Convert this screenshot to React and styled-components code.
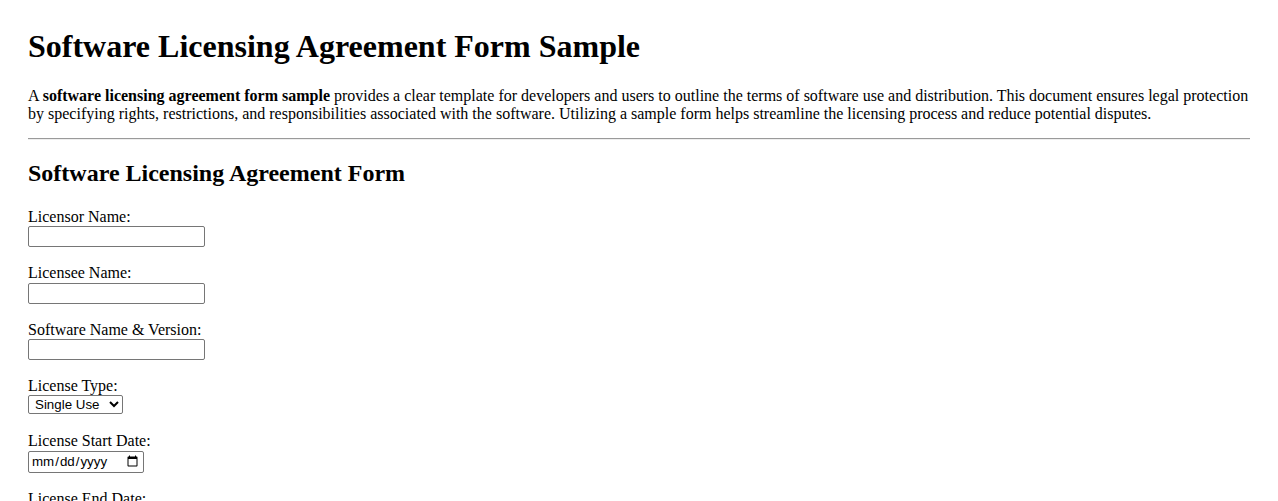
import React from 'react';
import styled, { createGlobalStyle } from 'styled-components';

const GlobalStyle = createGlobalStyle`
  html, body {
    margin: 0;
    padding: 0;
    background: #fff;
  }
  body {
    font-family: "Liberation Serif", "Times New Roman", serif;
    font-size: 16px;
    color: #000;
  }
`;

const Page = styled.div`
  padding: 28px 28px 40px;
`;

const Title = styled.h1`
  font-size: 32px;
  font-weight: bold;
  margin: 0 0 22px;
`;

const Intro = styled.p`
  margin: 0 0 14px;
  line-height: 18.4px;
`;

const Rule = styled.hr`
  margin: 0;
  border: none;
  border-top: 1px solid #9a9a9a;
  border-bottom: 1px solid #eeeeee;
`;

const FormTitle = styled.h2`
  font-size: 24px;
  font-weight: bold;
  margin: 19.92px 0 21px;
`;

const Form = styled.form`
  display: flex;
  flex-direction: column;
  align-items: flex-start;
  gap: 17px;
`;

const Field = styled.div`
  display: flex;
  flex-direction: column;
  align-items: flex-start;
`;

const Label = styled.label`
  display: block;
  line-height: 18.4px;
`;

const controlBase = `
  box-sizing: border-box;
  font-family: "Liberation Sans", Arial, sans-serif;
  font-size: 13.33px;
  color: #000;
  background: #fff;
  border: 1px solid #767676;
  border-radius: 2px;
  margin: 0;
`;

const TextInput = styled.input`
  ${controlBase}
  width: 177px;
  height: 21px;
  padding: 1px 2px;
`;

const Select = styled.select`
  ${controlBase}
  width: 95px;
  height: 19px;
  padding: 0 0 0 2px;
  margin-bottom: 1px;
`;

const DateInput = styled.input`
  ${controlBase}
  width: 116px;
  height: 22px;
  padding: 1px 2px;
`;

const fields = [
  { id: 'licensor', label: 'Licensor Name:' },
  { id: 'licensee', label: 'Licensee Name:' },
  { id: 'software', label: 'Software Name & Version:' },
];

export default function App() {
  return (
    <>
      <GlobalStyle />
      <Page>
        <Title>Software Licensing Agreement Form Sample</Title>
        <Intro>
          A <strong>software licensing agreement form sample</strong> provides a clear template for
          developers and users to outline the terms of software use and distribution. This document
          ensures legal protection by specifying rights, restrictions, and responsibilities associated
          with the software. Utilizing a sample form helps streamline the licensing process and reduce
          potential disputes.
        </Intro>
        <Rule />
        <FormTitle>Software Licensing Agreement Form</FormTitle>
        <Form onSubmit={e => e.preventDefault()}>
          {fields.map(f => (
            <Field key={f.id}>
              <Label htmlFor={f.id}>{f.label}</Label>
              <TextInput id={f.id} type="text" />
            </Field>
          ))}
          <Field>
            <Label htmlFor="licenseType">License Type:</Label>
            <Select id="licenseType" defaultValue="single">
              <option value="single">Single Use</option>
              <option value="multi">Multi-User</option>
              <option value="site">Site License</option>
              <option value="enterprise">Enterprise</option>
            </Select>
          </Field>
          <Field>
            <Label htmlFor="startDate">License Start Date:</Label>
            <DateInput id="startDate" type="date" />
          </Field>
          <Field>
            <Label htmlFor="endDate">License End Date:</Label>
            <DateInput id="endDate" type="date" />
          </Field>
        </Form>
      </Page>
    </>
  );
}
